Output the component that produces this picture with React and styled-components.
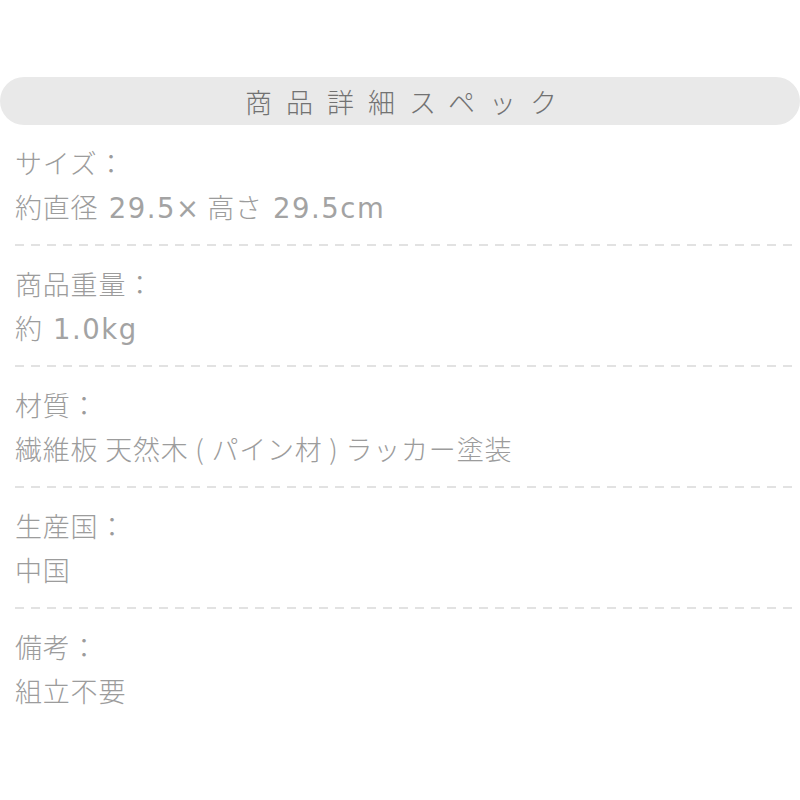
import React from "react";
import styled, { createGlobalStyle } from "styled-components";

const specs = [
  { label: "サイズ：", value: "約直径 29.5× 高さ 29.5cm" },
  { label: "商品重量：", value: "約 1.0kg" },
  { label: "材質：", value: "繊維板 天然木 ( パイン材 ) ラッカー塗装" },
  { label: "生産国：", value: "中国" },
  { label: "備考：", value: "組立不要" },
];

// split text into latin / japanese runs so numbers and units get the wider face
const LATIN = / ?[0-9A-Za-z.×]+/g;
const splitRuns = (text) => {
  const out = [];
  let last = 0;
  text.replace(LATIN, (match, offset) => {
    if (offset > last) out.push(text.slice(last, offset));
    out.push(<Latin key={offset}>{match}</Latin>);
    last = offset + match.length;
    return match;
  });
  if (last < text.length) out.push(text.slice(last));
  return out;
};

const App = () => {
  return (
    <Page>
      <GlobalStyle />
      <Heading>商品詳細スペック</Heading>
      <SpecList>
        {specs.map((spec, i) => (
          <SpecRow key={spec.label} last={i === specs.length - 1}>
            <Label>{spec.label}</Label>
            <Value>{splitRuns(spec.value)}</Value>
          </SpecRow>
        ))}
      </SpecList>
    </Page>
  );
};

const GlobalStyle = createGlobalStyle`
  body {
    margin: 0;
    background: #fff;
    font-family: "Noto Sans CJK JP", "Noto Sans", sans-serif;
  }
`;

const Page = styled.div`
  width: 800px;
  height: 800px;
  padding-top: 77px;
  box-sizing: border-box;
`;

const Heading = styled.h2`
  margin: 0;
  height: 48px;
  border-radius: 24px;
  background: #e9e9e9;
  color: #727272;
  font-size: 27px;
  font-weight: 300;
  letter-spacing: 14px;
  text-indent: 16px;
  display: flex;
  align-items: center;
  justify-content: center;
`;

const SpecList = styled.div`
  display: flex;
  flex-direction: column;
`;

const SpecRow = styled.div`
  padding: 16px 0 ${(props) => (props.last ? "0" : "15px")} 15px;
  border-bottom: ${(props) => (props.last ? "none" : "2px solid transparent")};
  background: ${(props) =>
    props.last
      ? "none"
      : "repeating-linear-gradient(90deg, #e2e2e2 0 9px, transparent 9px 16px) 15px 100% / calc(100% - 20px) 2px no-repeat"};
  background-origin: border-box;
`;

const Label = styled.div`
  height: 44px;
  color: #9c9c9c;
  font-size: 27px;
  font-weight: 300;
  line-height: 44px;
  letter-spacing: 0.8px;
  white-space: nowrap;
`;

const Value = styled(Label)``;

const Latin = styled.span`
  font-family: "DejaVu Sans", sans-serif;
  font-weight: 400;
  font-size: 27.5px;
  line-height: 1;
  letter-spacing: 1.5px;
  color: #a3a3a3;
`;

export default App;
